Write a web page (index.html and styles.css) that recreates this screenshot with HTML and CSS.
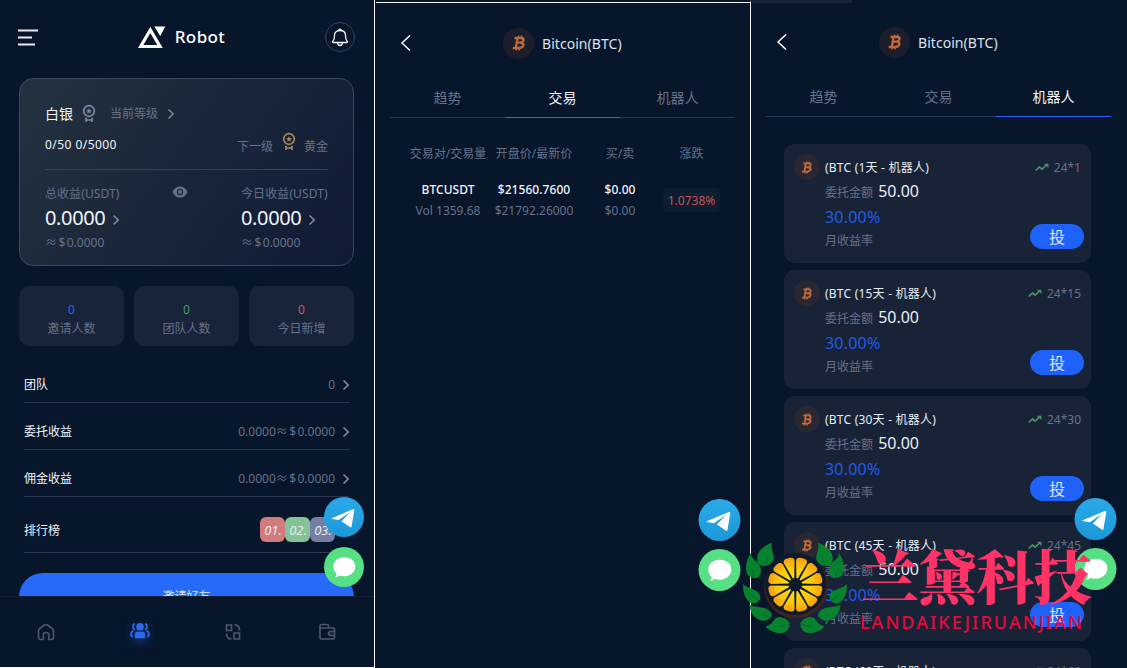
FILE: index.html
```html
<!DOCTYPE html>
<html lang="zh-CN">
<head>
<meta charset="utf-8">
<title>Robot</title>
<link rel="stylesheet" href="styles.css">
</head>
<body>
<svg class="defs" width="0" height="0">
  <defs>
    <linearGradient id="tg" x1="0" y1="0" x2="0" y2="1"><stop offset="0" stop-color="#2aa9ea"/><stop offset="1" stop-color="#1c98d6"/></linearGradient>
    <radialGradient id="citrus" gradientUnits="userSpaceOnUse" cx="0" cy="0" r="84"><stop offset=".2" stop-color="#ffdf10"/><stop offset=".65" stop-color="#fdc60c"/><stop offset="1" stop-color="#f79a12"/></radialGradient>
    <symbol id="chev" viewBox="0 0 8 12"><path d="M1.500 1.500 6.200 6 1.500 10.500" fill="none" stroke="currentColor" stroke-width="1.500"/></symbol>
    <symbol id="medal" viewBox="0 0 14 20"><circle cx="7" cy="7" r="5.300" fill="none" stroke="currentColor" stroke-width="1.700"/><path d="M7 4.200 7.900 6 9.900 6.200 8.400 7.600 8.800 9.500 7 8.600 5.200 9.500 5.600 7.600 4.100 6.200 6.100 6Z" fill="currentColor"/><path d="M4 13.800V18M10 13.800V18M3.500 16h7" fill="none" stroke="currentColor" stroke-width="1.700"/></symbol>
    <symbol id="btc" viewBox="0 0 14 16"><g fill="none" stroke="#c06a3c" stroke-width="2.300" transform="skewX(-10) translate(1.600 0)"><path d="M1.500 3H8Q10.800 3.200 10.800 5.200T8 7.700H4.500M8 7.700Q11.600 8 11.600 10.300T8 13H1.500M4.500 3V13"/><path d="M5.200.5V3M8.200.5V3M5.200 13v2.500M8.200 13v2.500" stroke-width="1.500"/></g></symbol>
    <symbol id="back" viewBox="0 0 12 18"><path d="M10 1.500 2 9l8 7.500" fill="none" stroke="#fff" stroke-width="1.500"/></symbol>
    <symbol id="trend" viewBox="0 0 14 9"><path d="M.8 7.500 4.500 4l2.600 2.200L11.500 2" fill="none" stroke="#4a9068" stroke-width="1.700"/><path d="M9 .8H13.500V5Z" fill="#4a9068"/></symbol>
    <symbol id="telegram" viewBox="0 0 40 40"><circle cx="20" cy="20" r="20" fill="url(#tg)"/><path d="M7.800 21.200 29.500 12.100Q30.400 12 30.300 13L27.600 29.500Q27.200 30.900 26 30.100L17.500 24.200 26 15.300 14.600 23 8 21.900Q7.200 21.600 7.800 21.200Z" fill="#fff"/></symbol>
    <symbol id="chat" viewBox="0 0 40 40"><circle cx="20" cy="20" r="20" fill="#56df83"/><path d="M20.300 10.200C27 10.200 31.300 14.400 31.300 19.500S27 29.200 20.300 29.200Q17.500 29.200 15.500 28.500 13.500 30.200 11 30.200 12.800 28.500 12.500 26.500 9.300 23.600 9.300 19.500C9.300 14.400 13.600 10.200 20.300 10.200Z" fill="#fff"/></symbol>
    <path id="wedge" d="M-2-20-16.500-70Q-18-80-8-81.500 0-82.500 8-81.500 18-80 16.500-70L2-20Z" fill="url(#citrus)"/>
    <g id="leaves">
      <path d="M125 98C95 108 75 130 82 155Q86 165 98 168 122 168 130 150C132 130 120 120 125 98Z"/>
      <path d="M62 128C45 155 42 185 55 198Q68 208 85 202 98 185 88 165C80 150 62 150 62 128Z"/>
      <path d="M38 222C38 250 45 272 65 280Q85 282 90 265C90 235 55 240 38 222Z"/>
      <path d="M57 285C62 320 85 335 105 332Q125 325 125 315C115 285 80 295 57 285Z"/>
      <path d="M105 350C125 370 155 375 170 362Q180 350 178 338C160 318 145 318 135 325 125 340 120 345 105 350Z"/>
      <path d="M105 166 113 136M72 204 64 174M84 272 62 254M124 324 92 312M178 342 146 350" fill="none" stroke="#065226" stroke-width="1.500"/>
    </g>
  </defs>
</svg>
<main class="screens">
  <section class="screen home">
    <header class="topbar">
      <svg width="20" height="17" viewBox="0 0 20 17" stroke="#e8ecf2" stroke-width="2"><path d="M0 1.500h20M0 8.500h14M0 15.500h17"/></svg>
      <div class="brand">
        <svg width="28" height="23" viewBox="0 0 28 23"><path d="M12.300 4 2.700 20.500H22Z" fill="none" stroke="#fff" stroke-width="3.200"/><path d="M15.500 0 28 0 22.300 11Z" fill="#fff" stroke="#07162b" stroke-width="1"/></svg>
        <span>Robot</span>
      </div>
      <div class="bell"><svg width="18" height="19" viewBox="0 0 18 19" fill="none" stroke="#f0f3f8" stroke-width="1.300" stroke-linejoin="round"><path d="M2 14.500Q1 14 2 12.800 3.500 11.400 3.500 7.500C3.500 4.200 5.800 2.500 9 2.500S14.500 4.200 14.500 7.500Q14.500 11.400 16 12.800 17 14 16 14.500ZM7.300 2.500Q9 0 10.700 2.500M6.500 15Q7 17.500 9 17.500T11.500 15"/></svg></div>
    </header>
    <div class="account">
      <div class="line level"><b>白银</b><svg width="14" height="20"><use href="#medal"/></svg><span>当前等级</span><svg width="8" height="12"><use href="#chev"/></svg></div>
      <div class="line progress"><span class="white">0/50 0/5000</span><span class="next">下一级<svg class="gold" width="14" height="20"><use href="#medal"/></svg>黄金</span></div>
      <div class="earnings">
        <div class="earn"><div class="label">总收益(USDT)</div><div class="amount">0.0000<svg width="8" height="12"><use href="#chev"/></svg></div><div class="approx">≈ $ 0.0000</div></div>
        <svg class="eye" width="16" height="12" viewBox="0 0 16 12"><path fill-rule="evenodd" fill="#65718a" d="M8 .5Q13 .5 15.500 6 13 11.500 8 11.500T.5 6Q3 .5 8 .5ZM8 2.800A3.200 3.200 0 1 0 8 9.200 3.200 3.200 0 0 0 8 2.800Z"/><circle cx="8" cy="6" r="2" fill="#65718a"/></svg>
        <div class="earn"><div class="label">今日收益(USDT)</div><div class="amount">0.0000<svg width="8" height="12"><use href="#chev"/></svg></div><div class="approx">≈ $ 0.0000</div></div>
      </div>
    </div>
    <div class="stats">
      <div class="stat"><b class="blue">0</b><span>邀请人数</span></div>
      <div class="stat"><b class="green">0</b><span>团队人数</span></div>
      <div class="stat"><b class="red">0</b><span>今日新增</span></div>
    </div>
    <div class="list">
      <div class="row"><b>团队</b><span>0</span><svg width="8" height="12"><use href="#chev"/></svg></div>
      <div class="row"><b>委托收益</b><span>0.0000≈ $ 0.0000</span><svg width="8" height="12"><use href="#chev"/></svg></div>
      <div class="row"><b>佣金收益</b><span>0.0000≈ $ 0.0000</span><svg width="8" height="12"><use href="#chev"/></svg></div>
      <div class="row rank"><b>排行榜</b><i class="r1">01.</i><i class="r2">02.</i><i class="r3">03.</i></div>
    </div>
    <div class="invite">邀请好友</div>
    <nav class="nav">
      <svg width="18" height="18" viewBox="0 0 18 18"><path d="M6.300 16.500H4Q1.500 16.500 1.500 14V8Q1.500 6.500 2.800 5.500L7.500 2Q9 1 10.500 2L15.200 5.500Q16.500 6.500 16.500 8V14Q16.500 16.500 14 16.500H11.700V11.500Q11.700 9.500 9 9.500T6.300 11.500Z"/></svg>
      <svg class="active" width="20" height="18" viewBox="0 0 20 18"><circle cx="10" cy="4.800" r="3.800" fill="#2b69ee" stroke="none"/><path d="M4.800 15.500V12.500Q4.800 9.800 7.500 9.800h5q2.700 0 2.700 2.700v3Q15.200 16.300 14 16.300H6Q4.800 16.300 4.800 15.500Z" fill="#2b69ee" stroke="none"/><path d="M5 1.800Q2.700 2.500 3 5T5 7.500M3.500 9Q1 9.500 1 12T3 14.500M15 1.800Q17.300 2.500 17 5T15 7.500M16.500 9Q19 9.500 19 12T17 14.500"/></svg>
      <svg width="18" height="18" viewBox="0 0 18 18"><path d="M2.500 2H7.500v5.500H2.500ZM10 10H15.500V16H10ZM10.500 1.800Q15.500 1.800 15.500 7.500M2.500 10.500Q2.500 16 7.500 16"/></svg>
      <svg width="18" height="18" viewBox="0 0 18 18"><path d="M2 5V3Q2 1.500 3.500 1.500H9Q10.500 1.500 10.500 3V5M2 5H15Q16.500 5 16.500 6.500V14.500Q16.500 16 15 16H3.500Q2 16 2 14.500V3M16.500 8.500H12.500Q10.500 8.800 10.500 10.500T12.500 12.500H16.500M12.500 10.500h1"/></svg>
    </nav>
    <div class="floaters"><svg><use href="#telegram"/></svg><svg><use href="#chat"/></svg></div>
  </section>

  <section class="screen trade">
    <header class="coinbar"><svg class="back" width="12" height="18"><use href="#back"/></svg><span class="coin"><svg width="14" height="16"><use href="#btc"/></svg></span><h1>Bitcoin(BTC)</h1></header>
    <div class="tabs"><span>趋势</span><span class="on">交易</span><span>机器人</span></div>
    <div class="quotes">
      <div class="th">交易对/交易量</div><div class="th">开盘价/最新价</div><div class="th">买/卖</div><div class="th">涨跌</div>
      <div class="td"><b>BTCUSDT</b><span class="vol">Vol 1359.68</span></div>
      <div class="td"><b>$21560.7600</b><span>$21792.26000</span></div>
      <div class="td"><b>$0.00</b><span>$0.00</span></div>
      <div class="td"><em>1.0738%</em></div>
    </div>
    <div class="floaters"><svg><use href="#telegram"/></svg><svg><use href="#chat"/></svg></div>
  </section>

  <section class="screen robots">
    <header class="coinbar"><svg class="back" width="12" height="18"><use href="#back"/></svg><span class="coin"><svg width="14" height="16"><use href="#btc"/></svg></span><h1>Bitcoin(BTC)</h1></header>
    <div class="tabs"><span>趋势</span><span>交易</span><span class="on">机器人</span></div>
    <div class="plans">
      <article class="plan"><span class="coin"><svg width="12" height="13"><use href="#btc"/></svg></span><div class="info"><h2>(BTC (1天 - 机器人)</h2><p>委托金额 <strong>50.00</strong></p><p class="rate">30.00%</p><p class="cap">月收益率</p></div><div class="side"><span><svg width="14" height="9"><use href="#trend"/></svg>24*1</span><button>投</button></div></article>
      <article class="plan"><span class="coin"><svg width="12" height="13"><use href="#btc"/></svg></span><div class="info"><h2>(BTC (15天 - 机器人)</h2><p>委托金额 <strong>50.00</strong></p><p class="rate">30.00%</p><p class="cap">月收益率</p></div><div class="side"><span><svg width="14" height="9"><use href="#trend"/></svg>24*15</span><button>投</button></div></article>
      <article class="plan"><span class="coin"><svg width="12" height="13"><use href="#btc"/></svg></span><div class="info"><h2>(BTC (30天 - 机器人)</h2><p>委托金额 <strong>50.00</strong></p><p class="rate">30.00%</p><p class="cap">月收益率</p></div><div class="side"><span><svg width="14" height="9"><use href="#trend"/></svg>24*30</span><button>投</button></div></article>
      <article class="plan"><span class="coin"><svg width="12" height="13"><use href="#btc"/></svg></span><div class="info"><h2>(BTC (45天 - 机器人)</h2><p>委托金额 <strong>50.00</strong></p><p class="rate">30.00%</p><p class="cap">月收益率</p></div><div class="side"><span><svg width="14" height="9"><use href="#trend"/></svg>24*45</span><button>投</button></div></article>
      <article class="plan"><span class="coin"><svg width="12" height="13"><use href="#btc"/></svg></span><div class="info"><h2>(BTC (60天 - 机器人)</h2></div><div class="side"><span><svg width="14" height="9"><use href="#trend"/></svg>24*60</span></div></article>
    </div>
    <div class="floaters"><svg><use href="#telegram"/></svg><svg><use href="#chat"/></svg></div>
  </section>
</main>
<div class="watermark">
  <svg class="emblem" width="104" height="92" viewBox="38 96 312 276">
    <circle cx="196" cy="229" r="96" fill="#3c261f"/><circle cx="195" cy="222" r="93" fill="#0d1a2c"/>
    <g transform="translate(195 224)"><use href="#wedge" transform="rotate(15)"/><use href="#wedge" transform="rotate(45)"/><use href="#wedge" transform="rotate(75)"/><use href="#wedge" transform="rotate(105)"/><use href="#wedge" transform="rotate(135)"/><use href="#wedge" transform="rotate(165)"/><use href="#wedge" transform="rotate(195)"/><use href="#wedge" transform="rotate(225)"/><use href="#wedge" transform="rotate(255)"/><use href="#wedge" transform="rotate(285)"/><use href="#wedge" transform="rotate(315)"/><use href="#wedge" transform="rotate(345)"/></g>
    <g fill="#07832f"><use href="#leaves"/><use href="#leaves" transform="translate(388 0) scale(-1 1)"/></g>
  </svg>
  <div class="mark"><div class="mark-cn">兰黛科技</div><div class="mark-en">LANDAIKEJIRUANJIAN</div></div>
</div>
</body>
</html>
```
FILE: styles.css
```css
* { box-sizing: border-box; margin: 0; }
body { width: 1127px; height: 668px; overflow: hidden; background: #07162b; color: #66718a; font: 12px/20px "Noto Sans", "Noto Sans CJK SC", sans-serif; }
svg { flex: none; }
b, h1, h2, strong { font-weight: 400; }
.defs { position: absolute; }
.screens { display: grid; grid-template-columns: 375px 376px 376px; height: 668px; }
.screen { position: relative; height: 668px; overflow: hidden; background: #07162b; }
.home { border-right: 1px solid #f4f6fa; border-bottom: 1px solid #f4f6fa; padding: 21px 20px 0 19px; }
.topbar { display: flex; align-items: center; justify-content: space-between; height: 32px; margin: 0 -1px; }
.brand { display: flex; align-items: center; gap: 9px; color: #fff; font-size: 17px; font-weight: 500; letter-spacing: .4px; }
.bell { display: flex; align-items: center; justify-content: center; width: 30px; height: 30px; border: 1px solid #33415a; border-radius: 50%; }
.account { height: 188px; margin-top: 25px; padding: 25px; border: 1px solid #3b485b; border-radius: 14px; background: linear-gradient(125deg, #24323f 0%, #1b283b 42%, #101b34 100%); }
.line { display: flex; align-items: center; height: 20px; }
.level b { color: #f2f4f8; font-size: 14px; }
.level svg { color: #7d8aa4; margin-left: 9px; }
.level span { margin-left: 14px; }
.progress { justify-content: space-between; height: 36px; padding-bottom: 11px; margin-top: 10px; border-bottom: 1px solid #354156; }
.white { color: #f2f4f8; margin-top: -3px; letter-spacing: .45px; }
.next { display: flex; padding-top: 1px; }
.gold { color: #a48a57; margin: -5px 8px 0 9px; }
.earnings { display: grid; grid-template-columns: 128px 68px 88px; padding-top: 14px; }
.eye { margin-top: 2px; margin-left: -1px; }
.label { white-space: nowrap; letter-spacing: .1px; }
.amount { display: flex; align-items: center; gap: 7px; height: 29px; padding-bottom: 1px; color: #f2f4f8; font-size: 20px; letter-spacing: -.35px; }
.amount svg { color: #8490a5; margin-top: 3px; }
.approx { word-spacing: -1.7px; }
.stats { display: grid; grid-template-columns: repeat(3, 105px); gap: 10px; margin-top: 20px; }
.stat { display: flex; flex-direction: column; align-items: center; height: 60px; padding-top: 14px; border-radius: 10px; background: #182439; }
.stat b, .stat span { line-height: 19px; }
.blue { color: #2962ff; } .green { color: #4f9a6b; } .red { color: #cb5561; }
.list { padding: 20px 5px 0; }
.row { display: flex; align-items: center; height: 47px; padding-top: 12px; border-bottom: 1px solid #2b3850; }
.row:first-child { height: 37px; padding-top: 2px; }
.row b { color: #f2f4f8; margin-right: auto; }
.row span { word-spacing: -1.7px; }
.row svg { margin-left: 7px; margin-right: -1px; color: #8893a8; }
.row.rank { height: 56px; padding: 11px 14px 0 0; }
.rank b { padding-top: 1px; }
.rank i { width: 25px; height: 25px; border-radius: 6px; color: #e6e9ef; font-size: 13px; line-height: 26px; text-align: center; padding-left: 1px; margin-top: -1px; }
.r1 { background: #d27b7c; } .r2 { background: #84c397; } .r3 { background: #7380a4; }
.invite { height: 50px; margin-top: 20px; border-radius: 24px; background: #266af7; color: #e0e7f5; line-height: 47px; text-align: center; }
.nav { position: absolute; left: 0; right: 0; bottom: 0; height: 71px; display: grid; grid-template-columns: repeat(4, 1fr); place-items: center; border-top: 1px solid #111e33; background: #07162b; }
.nav svg { fill: none; stroke: #4a566c; stroke-width: 1.7px; margin-left: -1px; }
.nav svg.active { stroke: #2b69ee; filter: drop-shadow(0 3px 4px #18418f); margin-top: -2px; }
.floaters { position: absolute; left: 324px; top: 497px; display: grid; gap: 10px; }
.floaters svg { width: 40px; height: 40px; display: block; }
.trade { border-top: 3px solid #07162b; border-right: 1px solid #f4f6fa; padding: 0 15px; overflow: visible; }
.trade::before { content: ""; position: absolute; left: 1px; right: 0; top: -1px; height: 1px; background: #f4f6fa; }
.trade .floaters, .robots .floaters { left: 323px; top: 496px; gap: 8px; }
.trade .floaters svg, .robots .floaters svg { width: 43px; height: 42px; }
.robots .floaters { top: 498px; }
.robots { padding: 2px 16px 0 15px; }
.robots::before { content: ""; position: absolute; left: 0; top: 0; width: 101px; height: 3px; background: #182338; }
.coinbar { display: flex; align-items: center; height: 80px; padding-left: 10px; }
.coin { display: flex; align-items: center; justify-content: center; width: 31px; height: 31px; border-radius: 50%; background: #1d1e2c; }
.coinbar .coin { margin: 0 8px 0 91px; }
.coinbar h1 { color: #dce1ea; font-size: 14px; letter-spacing: .05px; padding-top: 1px; }
.tabs { display: grid; grid-template-columns: repeat(3, 115px); height: 35px; border-bottom: 1px solid #283750; font-size: 14px; text-align: center; line-height: 30px; }
.tabs span { height: 35px; }
.tabs .on { color: #f2f4f8; border-bottom: 1px solid #2962ff; }
.quotes { display: grid; grid-template-columns: 86px 86px 86px 57px; padding: 26px 0 0 15px; text-align: center; }
.th { white-space: nowrap; margin-bottom: 15px; }
.td { display: flex; flex-direction: column; align-items: center; line-height: 21px; }
.td b { color: #f2f4f8; font-weight: 500; letter-spacing: .05px; }
.td em { width: 57px; height: 24px; margin-top: 9px; border-radius: 4px; background: #0d1e30; color: #c95158; line-height: 25px; font-style: normal; }
.plans { display: grid; gap: 7px; padding: 27px 20px 0 18px; }
.plan { display: grid; grid-template-columns: 26px 1fr auto; grid-template-rows: 95px; column-gap: 5px; height: 119px; padding: 10px 7px 14px 10px; border-radius: 11px; background: #182338; }
.plan .coin { width: 26px; height: 26px; background: #292832; }
.info h2 { color: #e9edf3; font-size: 12px; line-height: 28px; height: 26px; letter-spacing: .22px; white-space: nowrap; }
.info p { height: 22px; line-height: 22px; }
.info strong { color: #e9edf3; font-size: 16px; margin-left: 2px; }
.info .rate { color: #2459ee; font-size: 16px; height: 29px; line-height: 30px; letter-spacing: .2px; }
.info .cap { height: 19px; line-height: 19px; }
.side { display: flex; flex-direction: column; align-items: flex-end; justify-content: space-between; }
.side span { display: flex; align-items: center; gap: 5px; line-height: 27px; padding-right: 3px; }
.side button { width: 54px; height: 25px; padding: 0; border: 0; border-radius: 13px; background: #1e62fb; color: #e0e8ff; font: 16px/25px "Noto Sans CJK SC", sans-serif; }
.watermark { position: absolute; left: 743px; top: 542px; display: flex; gap: 14px; }
.mark-cn { height: 68px; color: #ff3366; font: 900 58px/64px "Noto Serif CJK SC", "Noto Sans CJK SC", serif; letter-spacing: -.4px; white-space: nowrap; }
.mark-en { color: #e40a3c; font-size: 18px; font-weight: 500; letter-spacing: 2px; line-height: 24px; margin-left: -1px; }
```
